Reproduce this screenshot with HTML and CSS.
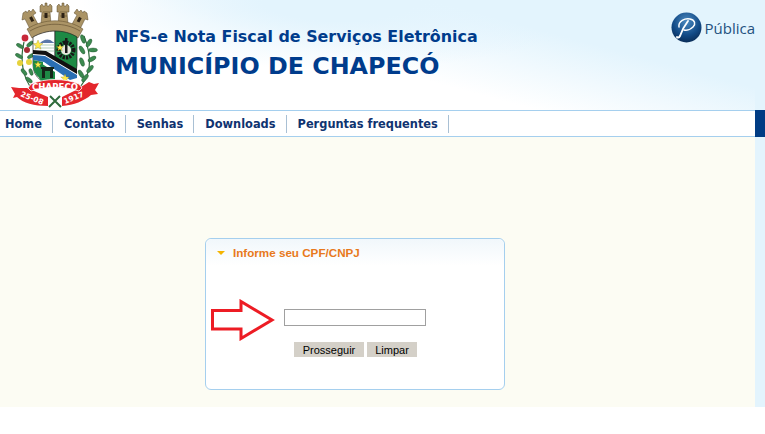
FILE: index.html
```html
<!DOCTYPE html>
<html>
<head>
<meta http-equiv="Content-Type" content="text/html; charset=utf-8">
<title>NFS-e Chapecó</title>
<link rel="stylesheet" href="styles.css">
</head>
<body>
	<div class="page">
		<div class="head">
			<svg class="brasao" width="90" height="108" viewBox="10 0 90 108">
				<!-- ramos -->
				<g fill="none" stroke="#2f6b3c" stroke-width="1.2">
					<path d="M33 90C22 78 20 58 24 42"/>
					<path d="M77 90C92 76 92 56 84 36"/>
				</g>
				<g fill="#3c8a50" stroke="#1f4f2c" stroke-width=".4">
					<ellipse cx="20" cy="46" rx="4" ry="1.800" transform="rotate(30 20 46)"/>
					<ellipse cx="30" cy="44" rx="4" ry="1.800" transform="rotate(-40 30 44)"/>
					<ellipse cx="19" cy="56" rx="4" ry="1.800" transform="rotate(30 19 56)"/>
					<ellipse cx="31" cy="56" rx="4" ry="1.800" transform="rotate(-30 31 56)"/>
					<ellipse cx="24" cy="72" rx="4" ry="1.800" transform="rotate(50 24 72)"/>
					<ellipse cx="31" cy="72" rx="3.500" ry="1.800" transform="rotate(70 31 72)"/>
					<ellipse cx="29" cy="80" rx="4" ry="1.800" transform="rotate(40 29 80)"/>
					<ellipse cx="83" cy="39" rx="4.500" ry="2" transform="rotate(70 83 39)"/>
					<ellipse cx="89" cy="43" rx="4.500" ry="2" transform="rotate(-60 89 43)"/>
					<ellipse cx="93" cy="50" rx="4.500" ry="2"/>
					<ellipse cx="82" cy="50" rx="4.500" ry="2" transform="rotate(60 82 50)"/>
					<ellipse cx="92" cy="59" rx="4.500" ry="2" transform="rotate(-30 92 59)"/>
					<ellipse cx="82" cy="62" rx="4.500" ry="2" transform="rotate(70 82 62)"/>
					<ellipse cx="90" cy="69" rx="4.500" ry="2" transform="rotate(-50 90 69)"/>
					<ellipse cx="81" cy="74" rx="4.500" ry="2" transform="rotate(60 81 74)"/>
					<ellipse cx="85" cy="78" rx="4.500" ry="2" transform="rotate(-50 85 78)"/>
				</g>
				<circle cx="25" cy="38" r="3.400" fill="#c8283a"/>
				<circle cx="27" cy="50" r="3" fill="#a82a33"/>
				<circle cx="20" cy="63" r="3" fill="#e6d23c"/>
				<circle cx="29" cy="62" r="3" fill="#e6d23c"/>
				<!-- coroa -->
				<g fill="#ab9466" stroke="#5a4829" stroke-width=".5">
					<path d="M23 13l3-2 1 2 2-3 2 2 2-3 3 4-3 2 6 11-8 5-6-12-3 1z"/>
					<path d="M40 6l2-2 1 2h2V3h2v3h2l1-2 2 2v6h-2l1 12H41l1-12h-2z"/>
					<path d="M57 6l2-2 1 2h2V3h2v3h2l1-2 2 2v6h-2l1 12H58l1-12h-2z"/>
					<path d="M87 13l-3-2-1 2-2-3-2 2-2-3-3 4 3 2-6 11 8 5 6-12 3 1z"/>
					<path d="M27 29c17-11 39-11 56 0l-5 9c-14-8-32-8-46 0z"/>
				</g>
				<g fill="none" stroke="#5c4a2c" stroke-width=".6">
					<path d="M30 31c15-9 35-9 50 0"/>
					<path d="M43 12h7M60 12h7M43 16h7M60 16h7"/>
				</g>
				<g fill="#2c2114">
					<rect x="44.500" y="13" width="3" height="5"/>
					<rect x="61.500" y="13" width="3" height="5"/>
					<rect x="30" y="17" width="3" height="5" transform="rotate(-28 31 19)"/>
					<rect x="78" y="17" width="3" height="5" transform="rotate(28 79 19)"/>
				</g>
				<!-- escudo -->
				<path d="M33 37c7-4 15-6 22-6v54c-10 0-22-7-22-20z" fill="#fff" stroke="#222" stroke-width=".7"/>
				<path d="M55 31c8 0 16 2 22 6v28c0 13-12 20-22 20z" fill="#1d8a45" stroke="#222" stroke-width=".7"/>
				<path d="M40 43c4-4 9-5 13-1l2 1H40z" fill="#5b78a8"/>
				<path d="M34 45h21M36 48h19M40 51h15" stroke="#7fae8f" stroke-width=".6"/>
				<path d="M33 52l22 6 22 15v7c-2 3-5 4-8 5H55L33 66z" fill="#fff"/>
				<path d="M33 50l13 1 31 18v5L45 55l-12-1z" fill="#111"/>
				<path d="M33 55l12 1 32 19v3L70 80 44 62l-11-2z" fill="#2a6fb4"/>
				<path d="M33 60l10 2v18c-6-3-10-8-10-15z" fill="#1d8a45"/>
				<path d="M39 62l16 10v13c-8 0-16-4-16-8z" fill="#1d8a45"/>
				<circle cx="66" cy="50" r="7.500" fill="none" stroke="#161616" stroke-width="4" stroke-dasharray="2.200 1"/>
				<circle cx="66" cy="50" r="5" fill="#e6e6dc"/>
				<rect x="65" y="38" width="2.500" height="15" fill="#1a1a1a"/>
				<path d="M41 67h13v2h-1v9h-3v-7h-5v7h-3v-9h-1z" fill="#15261a"/>
				<g fill="#ffe94a" stroke="#8a7a10" stroke-width=".3">
					<path d="M38 40l1.500 3.500h3.500l-3 2.200 1 3.500-3-2-3 2 1-3.500-3-2.200h3.500z"/>
					<path d="M60 44l1 2.500h2.500l-2 1.700.7 2.600-2.200-1.500-2.200 1.500.7-2.600-2-1.700h2.500z"/>
					<path d="M38 61l1 2.500h2.500l-2 1.700.7 2.600-2.200-1.500-2.200 1.500.7-2.600-2-1.700h2.500z"/>
					<path d="M65 74l1.200 3h3l-2.400 1.900.8 3-2.600-1.700-2.600 1.700.8-3-2.400-1.900h3z"/>
				</g>
				<!-- faixa -->
				<path d="M50 96l11 11M60 96l-11 11" stroke="#2f6b3c" stroke-width="2"/>
				<path d="M11 87l8 1 8 0 21 9v9c-14 0-25-3-31-9l-4 1 2-4z" fill="#e4262c"/>
				<path d="M99 83l-4 7 3 4-7 1c-7 6-17 10-29 11v-9l14-7 13-8 5 2z" fill="#e4262c"/>
				<path d="M28 88l3-4c14-6 34-6 48 0l3 4-3 3c-15-5-33-5-48 0z" fill="#e4262c" stroke="#fff" stroke-width=".8"/>
				<text class="cr1" x="55" y="89.500" text-anchor="middle" textLength="46">CHAPECO</text>
				<text class="cr2" x="20" y="96" transform="rotate(22 20 96)">25-08</text>
				<text class="cr2" x="65" y="104" transform="rotate(-22 65 104)">1917</text>
			</svg>
			<div class="tit">
				<h2>NFS-e Nota Fiscal de Serviços Eletrônica</h2>
				<h1>MUNICÍPIO DE CHAPECÓ</h1>
			</div>
			<div class="logo">
				<svg width="31" height="31" viewBox="0 0 31 31">
					<defs>
						<radialGradient id="bola" cx="50%" cy="30%" r="70%">
							<stop offset="0" stop-color="#4c8ac0"/>
							<stop offset=".65" stop-color="#124a86"/>
							<stop offset="1" stop-color="#0a2d58"/>
						</radialGradient>
					</defs>
					<circle cx="15.500" cy="15.500" r="15" fill="url(#bola)"/>
					<path d="M8 15C7 9 14 6 19 7c5 1 6 5 3 8-2 2-6 4-9 3" fill="none" stroke="#fff" stroke-width="1.500" stroke-linecap="round"/>
					<path d="M17 9c-3 4-6 9-8 15-1 2-3 2-3 1" fill="none" stroke="#fff" stroke-width="1.900" stroke-linecap="round"/>
				</svg>
				<span>Pública</span>
			</div>
		</div>
		<div class="menu">
			<a>Home</a><a>Contato</a><a>Senhas</a><a>Downloads</a><a>Perguntas frequentes</a>
		</div>
		<div class="main">
			<div class="box">
				<div class="box-tit"><i class="seta"></i>Informe seu CPF/CNPJ</div>
				<div class="box-campo"><input type="text" class="ipt"></div>
				<div class="box-btns">
					<input type="button" class="btn b1" value="Prosseguir">
					<input type="button" class="btn b2" value="Limpar">
				</div>
				<svg class="aviso" width="64" height="42" viewBox="0 0 64 42">
					<path d="M1.500 11.500H30V2.500l31 18.500-31 18.500v-9.500H1.500z" fill="#fff" stroke="#ed1c24" stroke-width="3"/>
				</svg>
			</div>
		</div>
	</div>
</body>
</html>
```

FILE: styles.css
```css
html,body{margin:0;height:100%;background:#fff}
body{font-family:"Liberation Sans",Arial,sans-serif}
.page{background:#e3f4fd;height:407px;padding-right:10px}

.head{
	height:110px;display:flex;align-items:flex-start;
	background:
		radial-gradient(ellipse 260px 70px at 340px 0,#e3f4fd 30%,rgba(227,244,253,0) 100%),
		linear-gradient(15deg,#fff 46%,#e3f4fd 72%);
}
.brasao{flex:none;margin:0 15px 0 10px}
.cr1{font:bold 8.500px "DejaVu Sans",sans-serif;fill:#fff}
.cr2{font:bold 7.500px "DejaVu Sans",sans-serif;fill:#fff}
.tit{flex:1;color:#003c8c;font-family:"DejaVu Sans",Verdana,sans-serif;padding-top:27px}
.tit h2{margin:0;font-size:15.900px;line-height:20px;font-weight:bold}
.tit h1{margin:5px 0 0;font-size:23.800px;line-height:28px;font-weight:bold}
.logo{display:flex;align-items:center;gap:3px;padding-top:12px;color:#24517f;font:15px "Open Sans",sans-serif}

.menu{
	height:25px;background:#fff;display:flex;align-items:center;
	border-top:1px solid #a5cfee;border-bottom:1px solid #a5cfee;
	box-shadow:10px 0 0 #003c84;
}
.menu a{
	font:bold 11.400px "DejaVu Sans",Verdana,sans-serif;color:#0f3370;
	line-height:18px;padding:0 10px 0 11px;border-right:1px solid #a9c0d4;cursor:pointer;
}
.menu a:first-child{padding-left:5px}

.main{height:270px;background:#fcfcf3;padding-top:101px;box-sizing:border-box}
.box{
	position:relative;width:298px;height:150px;margin-left:205px;
	background:#fff;border:1px solid #a5cfee;border-radius:6px;
}
.box-tit{
	height:27px;padding-left:11px;display:flex;align-items:center;
	font-size:11.650px;font-weight:bold;color:#e8791c;border-radius:6px 6px 0 0;
	background:linear-gradient(to bottom,#f1f7fb,#fff);
}
.seta{
	width:0;height:0;margin-right:8px;
	border-top:4px solid #f5b400;border-left:4px solid transparent;border-right:4px solid transparent;
}
.box-campo{padding:43px 0 0 78px}
.ipt{
	display:block;width:142px;height:17px;box-sizing:border-box;padding:0;
	border:1px solid #a0a0a0;background:#fff;outline:none;
}
.box-btns{display:flex;gap:3px;padding:16px 0 0 88px}
.btn{
	height:15px;padding:0;border:none;background:#d4d0c8;color:#000;
	font:11px "Liberation Sans",Arial,sans-serif;
}
.b1{width:70px}
.b2{width:50px}
.aviso{position:absolute;left:5px;top:60px}
```
